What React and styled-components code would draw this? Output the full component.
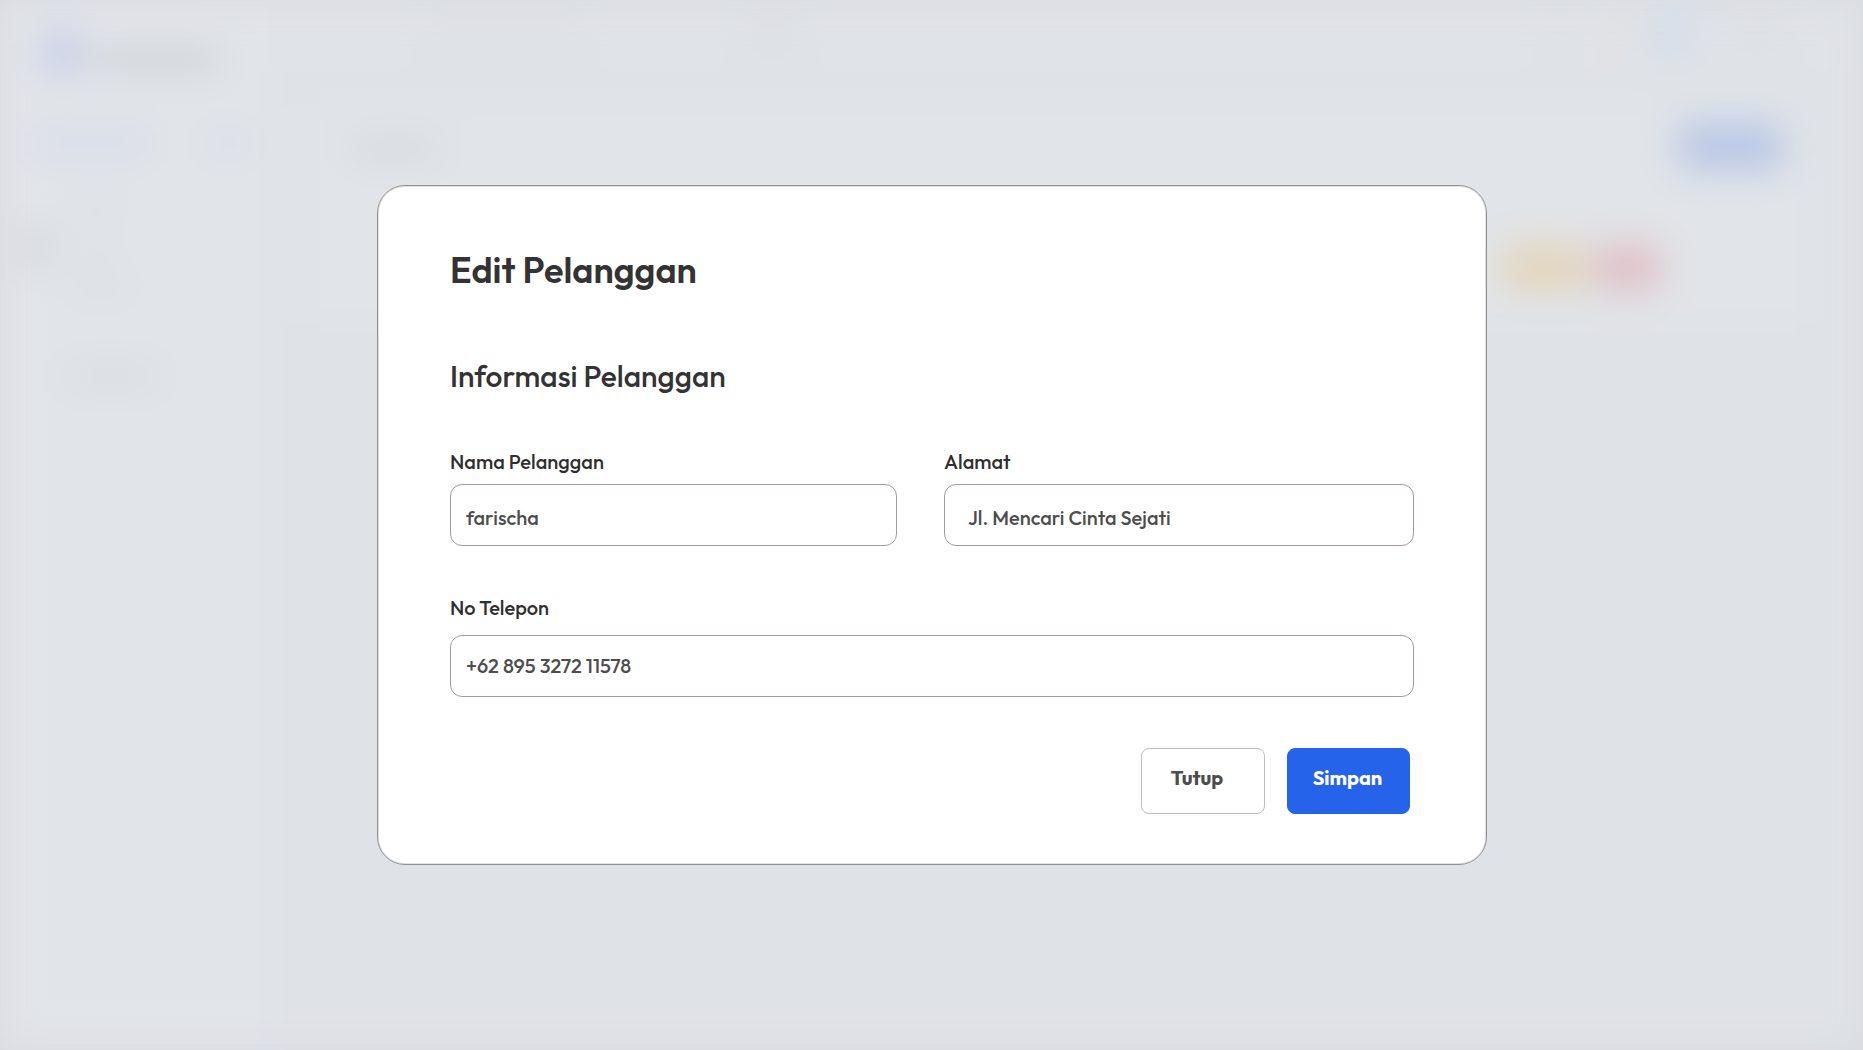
import React from "react";
import styled, { createGlobalStyle } from "styled-components";

const GlobalStyle = createGlobalStyle`
  *, *::before, *::after { box-sizing: border-box; }
  html, body { margin: 0; padding: 0; }
  body {
    overflow: hidden;
    background: #d8dbe0;
    font-family: Outfit, Lato, "Open Sans", sans-serif;
  }
`;

const Screen = styled.div`
  position: relative;
  width: 100vw;
  height: 100vh;
  overflow: hidden;
`;

/* Dashboard behind the dialog */
const Dashboard = styled.div`
  display: flex;
  height: 100%;
  background: #dfe2e7;
  filter: blur(18px);
`;

const Sidebar = styled.aside`
  flex: 0 0 270px;
  padding: 32px 0 0 16px;
  background: #e1e4e8;
`;

const Brand = styled.div`
  display: flex;
  align-items: center;
  gap: 12px;
  padding-left: 25px;
`;

const Block = styled.div`
  flex: none;
  width: ${(p) => p.$w}px;
  height: ${(p) => p.$h}px;
  margin: ${(p) => p.$m || 0};
  border-radius: ${(p) => p.$r || 6}px;
  background: ${(p) => p.$c};
`;

const NavRow = styled.div`
  display: flex;
  align-items: center;
  padding: 6px 0 0 16px;
  margin-top: ${(p) => p.$top}px;
`;

const Main = styled.main`
  flex: 1;
  min-width: 0;
`;

const Topbar = styled.header`
  display: flex;
  align-items: center;
  height: 70px;
  padding: 0 70px 0 150px;
  background: #e0e3e7;
`;

const Spacer = styled.div`
  flex: 1;
`;

const Panel = styled.section`
  height: 217px;
  margin: 35px 55px 0 37px;
  padding: 18px 25px 0 43px;
  background: #e1e4e8;
`;

const PanelHead = styled.div`
  display: flex;
  align-items: center;
  justify-content: space-between;
`;

const PanelActions = styled.div`
  display: flex;
  justify-content: flex-end;
  gap: 9px;
  padding: 75px 123px 0 0;
`;

/* Dialog */
const Overlay = styled.div`
  position: absolute;
  inset: 0;
  display: flex;
  align-items: center;
  justify-content: center;
`;

const Dialog = styled.form`
  display: flex;
  flex-direction: column;
  width: 1110px;
  height: 680px;
  margin-left: 1px;
  padding: 62px 72px 0;
  border: 1px solid #909194;
  border-radius: 28px;
  background: #fff;
  box-shadow: inset 0 0 0 1px #e2e2e3;
`;

const Title = styled.h1`
  margin: 0;
  color: #333;
  font-size: 36px;
  font-weight: 600;
  line-height: 44px;
`;

const Subtitle = styled.h2`
  margin: 66px 0 55px;
  color: #333;
  font-size: 29.9px;
  font-weight: 500;
  line-height: 36px;
`;

const FieldRow = styled.div`
  display: grid;
  grid-template-columns: 447px 470px;
  justify-content: space-between;
  margin-bottom: 49px;
`;

const Field = styled.label`
  display: flex;
  flex-direction: column;
  gap: ${(p) => p.$gap}px;
`;

const Label = styled.span`
  color: #2f2f2f;
  font-size: 20px;
  font-weight: 500;
  line-height: 25px;
  white-space: nowrap;
`;

const Input = styled.input`
  width: 100%;
  height: 62px;
  padding: ${(p) => p.$top || 0}px 15px ${(p) => p.$bottom || 0}px ${(p) => p.$left || 15}px;
  border: 1px solid #a5999c;
  border-radius: 12px;
  outline: none;
  background: #fff;
  color: #4d4d4d;
  font-family: inherit;
  font-size: 19.95px;
  font-weight: 500;
`;

const Actions = styled.div`
  display: flex;
  justify-content: flex-end;
  gap: 22px;
  margin-top: 51px;
  padding-right: 4px;
`;

const Button = styled.button`
  width: ${(p) => (p.$primary ? 123 : 124)}px;
  height: 66px;
  padding: 0 ${(p) => (p.$primary ? 2 : 12)}px 7px 0;
  border: 1px solid ${(p) => (p.$primary ? "#2563eb" : "#bdbdbd")};
  border-radius: 8px;
  background: ${(p) => (p.$primary ? "#2563eb" : "#fff")};
  color: ${(p) => (p.$primary ? "#fff" : "#4d4d4d")};
  font-family: inherit;
  font-size: 20px;
  font-weight: 700;
`;

export default function App() {
  return (
    <>
      <GlobalStyle />
      <Screen>
        <Dashboard aria-hidden="true">
          <Sidebar>
            <Brand>
              <Block $w={42} $h={42} $r={21} $c="#c5cbe9" />
              <Block $w={124} $h={20} $m="12px 0 0" $c="#cccfd4" />
            </Brand>
            <NavRow $top={52}>
              <Block $w={118} $h={22} $c="#d7dce9" />
              <Block $w={44} $h={18} $m="0 0 0 56px" $c="#d8dde8" />
            </NavRow>
            <NavRow $top={38}>
              <Block $w={36} $h={14} $m="0 0 0 46px" $c="#dadde1" />
            </NavRow>
            <NavRow $top={11}>
              <Block $w={24} $h={36} $m="0 0 0 -8px" $c="#cfd2d6" />
              <Block $w={28} $h={14} $m="0 0 0 32px" $c="#dadde0" />
            </NavRow>
            <NavRow $top={8}>
              <Block $w={60} $h={14} $m="0 0 0 38px" $c="#dadde1" />
            </NavRow>
            <NavRow $top={68}>
              <Block $w={94} $h={18} $m="0 0 0 32px" $c="#d7dade" />
            </NavRow>
          </Sidebar>
          <Main>
            <Topbar>
              <Block $w={170} $h={16} $c="#dbdee3" />
              <Block $w={54} $h={24} $m="0 0 0 155px" $c="#dadde2" />
              <Spacer />
              <Block $w={30} $h={18} $c="#dbdee2" />
              <Block $w={24} $h={22} $m="0 0 0 42px" $c="#dfdcdf" />
              <Block $w={36} $h={36} $m="0 0 0 17px" $r={18} $c="#cbdaec" />
              <Block $w={70} $h={18} $m="0 0 0 32px" $c="#dadde1" />
            </Topbar>
            <Panel>
              <PanelHead>
                <Block $w={90} $h={18} $m="4px 0 0" $c="#d3d6da" />
                <Block $w={105} $h={47} $c="#b8c7e6" />
              </PanelHead>
              <PanelActions>
                <Block $w={82} $h={45} $c="#e3d5ba" />
                <Block $w={66} $h={45} $c="#e0c0c7" />
              </PanelActions>
            </Panel>
          </Main>
        </Dashboard>
        <Overlay>
          <Dialog role="dialog" aria-label="Edit Pelanggan">
            <Title>Edit Pelanggan</Title>
            <Subtitle>Informasi Pelanggan</Subtitle>
            <FieldRow>
              <Field $gap={10}>
                <Label>Nama Pelanggan</Label>
                <Input defaultValue="farischa" $top={5} />
              </Field>
              <Field $gap={10}>
                <Label>Alamat</Label>
                <Input defaultValue="Jl. Mencari Cinta Sejati" $top={5} $left={23} />
              </Field>
            </FieldRow>
            <Field $gap={15}>
              <Label>No Telepon</Label>
              <Input defaultValue="+62 895 3272 11578" $bottom={2} />
            </Field>
            <Actions>
              <Button type="button">Tutup</Button>
              <Button type="button" $primary>Simpan</Button>
            </Actions>
          </Dialog>
        </Overlay>
      </Screen>
    </>
  );
}
